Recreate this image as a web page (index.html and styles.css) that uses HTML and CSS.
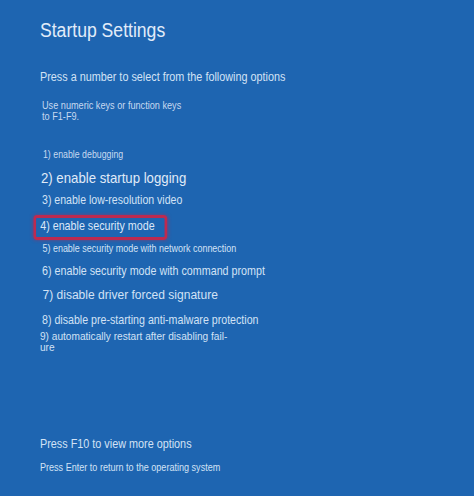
FILE: index.html
```html
<!DOCTYPE html>
<html lang="en">
<head>
<meta charset="utf-8">
<title>Startup Settings</title>
<link rel="stylesheet" href="styles.css">
</head>
<body>
<main class="screen">
  <h1 class="title">Startup Settings</h1>
  <p class="prompt">Press a number to select from the following options</p>
  <p class="hint">Use numeric keys or function keys<br>to F1-F9.</p>
  <ul class="options">
    <li class="opt opt1">1) enable debugging</li>
    <li class="opt opt2">2) enable startup logging</li>
    <li class="opt opt3">3) enable low-resolution video</li>
    <li class="opt opt4"><span class="selected">4) enable security mode</span></li>
    <li class="opt opt5">5) enable security mode with network connection</li>
    <li class="opt opt6">6) enable security mode with command prompt</li>
    <li class="opt opt7">7) disable driver forced signature</li>
    <li class="opt opt8">8) disable pre-starting anti-malware protection</li>
    <li class="opt opt9">9) automatically restart after disabling fail-<br>ure</li>
  </ul>
  <p class="more">Press F10 to view more options</p>
  <p class="enter">Press Enter to return to the operating system</p>
</main>
</body>
</html>
```
FILE: styles.css
```css
html, body {
  margin: 0;
  height: 100%;
  background: #1e65b1;
}
body {
  font-family: "Liberation Sans", Arial, sans-serif;
  color: #d2e2f5;
  overflow: hidden;
}
.screen {
  transform: scaleX(0.88);
  transform-origin: 0 0;
  padding: 18px 0 0 45.45px;
  display: flex;
  flex-direction: column;
  align-items: flex-start;
}
.screen p, .screen h1 {
  margin: 0;
  white-space: nowrap;
}
.title {
  font-size: 20px;
  line-height: 24px;
  font-weight: normal;
  color: #e2ecf9;
}
.prompt {
  font-size: 12.3px;
  line-height: 16px;
  margin-top: 27px !important;
}
.hint {
  font-size: 10.4px;
  line-height: 11px;
  margin-top: 14.5px !important;
  margin-left: 2.3px !important;
  color: #c6d9f0;
}
.options {
  list-style: none;
  margin: 26.5px 0 0;
  padding: 0;
  display: flex;
  flex-direction: column;
  align-items: flex-start;
}
.opt {
  white-space: nowrap;
}
.opt1 { font-size: 10px; line-height: 14px; margin-left: 3.4px; color: #c6d9f0; }
.opt2 { font-size: 15px; line-height: 20px; margin-top: 5.8px; margin-left: 1.1px; color: #e0ebf8; }
.opt3 { font-size: 12px; line-height: 16px; margin-top: 4.3px; margin-left: 2.3px; }
.opt4 { margin-top: 6.5px; }
.selected {
  display: block;
  box-sizing: border-box;
  width: 152px;
  margin-left: -7.3px;
  padding: 2px 0 4px 4.5px;
  border: 3px solid #bd2a50;
  border-radius: 4px;
  box-shadow: 0 0 4px rgba(190, 35, 75, 0.6);
  font-size: 12.2px;
  line-height: 13px;
  color: #dbe7f7;
}
.opt5 { font-size: 10.2px; line-height: 14px; margin-top: 2.2px; margin-left: 2.8px; }
.opt6 { font-size: 12.2px; line-height: 16px; margin-top: 7.6px; margin-left: 2.3px; }
.opt7 { font-size: 13.7px; line-height: 18px; margin-top: 6.5px; margin-left: 2.8px; }
.opt8 { font-size: 12.1px; line-height: 16px; margin-top: 7.9px; margin-left: 2.3px; }
.opt9 { font-size: 11.5px; line-height: 10.7px; margin-top: 3.2px; }
.more {
  font-size: 12.3px;
  line-height: 16px;
  margin-top: 83.3px !important;
}
.enter {
  font-size: 10.3px;
  line-height: 14px;
  margin-top: 9.7px !important;
}
```
